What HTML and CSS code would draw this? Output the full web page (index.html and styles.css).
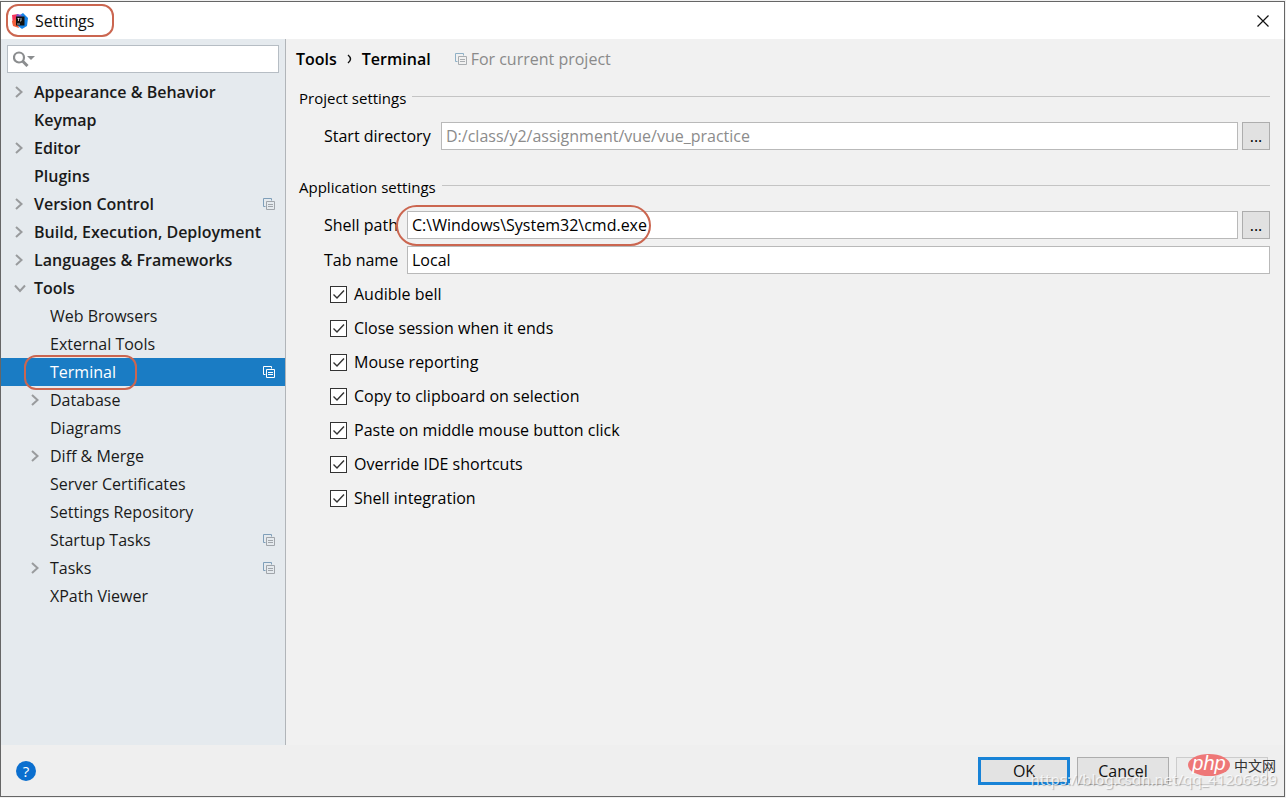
FILE: index.html
```html
<!DOCTYPE html>
<html lang="en">
<head>
<meta charset="utf-8">
<title>Settings</title>
<link rel="stylesheet" href="styles.css">
</head>
<body>
<svg class="defs" aria-hidden="true">
  <symbol id="chevron" viewBox="0 0 12 12"><path d="M2 1l5.500 5L2 11" fill="none" stroke="#999b9d" stroke-width="2"/></symbol>
  <symbol id="chevron-down" viewBox="0 0 12 12"><path d="M1 3.500l5 5.500 5-5.500" fill="none" stroke="#999b9d" stroke-width="2"/></symbol>
  <symbol id="copy" viewBox="0 0 12 12"><path d="M2.500 8.500h-2v-8h8v2" fill="none" stroke="var(--back)"/><path d="M3.500 3.500h8v8h-8zM5 6.500h5M5 8.500h5" fill="none" stroke="var(--front)"/></symbol>
</svg>
<div class="window">
  <header class="titlebar">
    <svg class="app-icon" viewBox="0 0 16 16"><path d="M0 2l6-1 3 4-3 9-5-2z" fill="#f5365d"/><path d="M0 8l4-2 3 9-6-2z" fill="#f2603b"/><path d="M8 2l3-2 5 5-1 8-5 3-4-3z" fill="#1684e8"/><path d="M5 1l5 1-2 3-4-1z" fill="#7b55c9"/><path d="M4 3.500h8.500v9H4z" fill="#111"/><path d="M5.500 5.500h2M6.500 5v3M9 5v3H8M5 11h3" stroke="#ddd" stroke-width=".8" fill="none"/></svg>
    <h1 class="title">Settings</h1>
    <span class="mark mark-title"></span>
    <button class="close" aria-label="Close"><svg viewBox="0 0 12 12"><path d="M.5.5l11 11M11.500.5l-11 11" stroke="#111" stroke-width="1.200"/></svg></button>
  </header>
  <div class="body">
    <aside class="sidebar">
      <label class="search">
        <svg viewBox="0 0 24 16"><circle cx="6" cy="6.500" r="5" fill="none" stroke="#8b8d8f" stroke-width="2.200"/><path d="M9.500 10l5 5" stroke="#8b8d8f" stroke-width="3"/><path d="M14 5h8l-4 4z" fill="#8b8d8f"/></svg>
        <input type="text" aria-label="Search settings">
      </label>
      <nav class="tree">
        <a class="row top" href="#"><svg class="arrow"><use href="#chevron"/></svg><span>Appearance &amp; Behavior</span></a>
        <a class="row top" href="#"><i class="arrow"></i><span>Keymap</span></a>
        <a class="row top" href="#"><svg class="arrow"><use href="#chevron"/></svg><span>Editor</span></a>
        <a class="row top" href="#"><i class="arrow"></i><span>Plugins</span></a>
        <a class="row top" href="#"><svg class="arrow"><use href="#chevron"/></svg><span>Version Control</span><svg class="copy"><use href="#copy"/></svg></a>
        <a class="row top" href="#"><svg class="arrow"><use href="#chevron"/></svg><span>Build, Execution, Deployment</span></a>
        <a class="row top" href="#"><svg class="arrow"><use href="#chevron"/></svg><span>Languages &amp; Frameworks</span></a>
        <a class="row top" href="#"><svg class="arrow"><use href="#chevron-down"/></svg><span>Tools</span></a>
        <a class="row sub" href="#"><i class="arrow"></i><span>Web Browsers</span></a>
        <a class="row sub" href="#"><i class="arrow"></i><span>External Tools</span></a>
        <a class="row sub selected" href="#"><i class="arrow"></i><span>Terminal</span><svg class="copy"><use href="#copy"/></svg><b class="mark mark-row"></b></a>
        <a class="row sub" href="#"><svg class="arrow"><use href="#chevron"/></svg><span>Database</span></a>
        <a class="row sub" href="#"><i class="arrow"></i><span>Diagrams</span></a>
        <a class="row sub" href="#"><svg class="arrow"><use href="#chevron"/></svg><span>Diff &amp; Merge</span></a>
        <a class="row sub" href="#"><i class="arrow"></i><span>Server Certificates</span></a>
        <a class="row sub" href="#"><i class="arrow"></i><span>Settings Repository</span></a>
        <a class="row sub" href="#"><i class="arrow"></i><span>Startup Tasks</span><svg class="copy"><use href="#copy"/></svg></a>
        <a class="row sub" href="#"><svg class="arrow"><use href="#chevron"/></svg><span>Tasks</span><svg class="copy"><use href="#copy"/></svg></a>
        <a class="row sub" href="#"><i class="arrow"></i><span>XPath Viewer</span></a>
      </nav>
    </aside>
    <main class="content">
      <div class="crumbs"><b>Tools</b><svg class="crumb-arrow" viewBox="0 0 5 10"><path d="M1 1q5 4 0 8" fill="none" stroke="#111" stroke-width="1.500"/></svg><b>Terminal</b><span class="scope"><svg class="copy"><use href="#copy"/></svg>For current project</span></div>
      <h2 class="group">Project settings</h2>
      <div class="field start"><label for="dir">Start directory</label><input id="dir" type="text" placeholder="D:/class/y2/assignment/vue/vue_practice"><button class="browse">...</button></div>
      <h2 class="group">Application settings</h2>
      <div class="field"><label for="shell">Shell path</label><input id="shell" type="text" value="C:\Windows\System32\cmd.exe"><button class="browse">...</button><span class="mark mark-shell"></span></div>
      <div class="field"><label for="tab">Tab name</label><input id="tab" type="text" value="Local"></div>
      <div class="checks">
        <label><input type="checkbox" checked>Audible bell</label>
        <label><input type="checkbox" checked>Close session when it ends</label>
        <label><input type="checkbox" checked>Mouse reporting</label>
        <label><input type="checkbox" checked>Copy to clipboard on selection</label>
        <label><input type="checkbox" checked>Paste on middle mouse button click</label>
        <label><input type="checkbox" checked>Override IDE shortcuts</label>
        <label><input type="checkbox" checked>Shell integration</label>
      </div>
    </main>
  </div>
  <footer class="footer">
    <button class="help" aria-label="Help">?</button>
    <button class="btn primary">OK</button>
    <button class="btn">Cancel</button>
    <button class="btn faded" disabled aria-label="Apply"></button>
    <span class="blog">https://blog.csdn.net/qq_41206989</span>
    <span class="brand"><span class="php">php</span><span class="cn">中文网</span></span>
  </footer>
</div>
</body>
</html>
```
FILE: styles.css
```css
* { box-sizing: border-box; }
body {
  margin: 0;
  background: #f0f0f0;
  color: #111;
  font: 16px/20px "Open Sans", "Noto Sans", "Noto Sans CJK SC", sans-serif;
}
h1, h2 { margin: 0; font-weight: 400; }
b { font-weight: 600; }
input, button { font: inherit; color: inherit; margin: 0; }
.defs { position: absolute; width: 0; height: 0; }
.window {
  display: flex;
  flex-direction: column;
  min-height: calc(100vh - 2px);
  margin: 1px 1px 1px 0;
  border: 1px solid #666;
  background: #f1f1f1;
}
.titlebar {
  position: relative;
  display: flex;
  align-items: center;
  gap: 7px;
  height: 37px;
  padding: 0 15px 0 11px;
  background: #fff;
}
.app-icon { width: 16px; height: 16px; }
.title { font-size: 16px; }
.close { margin-left: auto; padding: 0; border: 0; background: none; line-height: 0; }
.close svg { width: 12px; height: 12px; }
.mark {
  position: absolute;
  border: 2px solid #cb6650;
  pointer-events: none;
}
.mark-title { left: 5px; top: 2px; width: 108px; height: 33px; border-radius: 12px; }
.mark-row { left: 23px; top: -3px; width: 113px; height: 35px; border-radius: 12px; }
.mark-shell { left: 97px; top: -6px; width: 255px; height: 41px; border-radius: 24px; }
.body { display: flex; flex: 1; }
.sidebar { width: 285px; border-right: 1px solid #b1b5b9; background: #e5eaee; }
.search {
  display: flex;
  align-items: center;
  height: 28px;
  margin: 6px 6px 5px;
  padding-left: 5px;
  border: 1px solid #b6bdc4;
  background: #fff;
}
.search svg { width: 24px; height: 16px; }
.search input { flex: 1; min-width: 0; border: 0; outline: 0; background: none; }
.row {
  --back: #7f9fb9;
  --front: #a0a5aa;
  position: relative;
  display: flex;
  align-items: center;
  height: 28px;
  padding: 0 10px 0 13px;
  color: #1a1a1a;
  text-decoration: none;
  white-space: nowrap;
}
.top { font-weight: 600; }
.sub { padding-left: 29px; }
.arrow { width: 12px; height: 12px; margin-right: 8px; }
.copy { width: 12px; height: 12px; }
.row .copy { margin-left: auto; }
.selected { --back: #fff; --front: #fff; background: #1a7cc4; color: #fff; }
.content { flex: 1; min-width: 0; padding: 10px 14px 20px 13px; color: #000; }
.crumbs { display: flex; align-items: center; gap: 10px; margin-left: -3px; }
.crumb-arrow { width: 5px; height: 10px; }
.scope {
  --back: #8fb0c6;
  --front: #a9adb0;
  display: flex;
  align-items: center;
  gap: 4px;
  margin-left: 14px;
  color: #8a8a8a;
}
.group { display: flex; gap: 6px; margin: 19px 0 14px; font-size: 15px; }
.group::after { content: ""; flex: 1; height: 1px; margin-top: 8px; background: #c4c4c4; }
.field { position: relative; display: flex; align-items: center; height: 28px; margin-bottom: 7px; padding-left: 25px; }
.field label { width: 83px; white-space: nowrap; }
.start { margin-bottom: 27px; }
.start label { width: 117px; }
.field input {
  flex: 1;
  min-width: 0;
  height: 28px;
  padding: 0 4px;
  border: 1px solid #b9b9b9;
  border-radius: 0;
  background: #fff;
}
.field input::placeholder { color: #8c8c8c; opacity: 1; }
.browse { width: 28px; height: 28px; margin-left: 4px; padding: 0; border: 1px solid #adadad; background: #e1e1e1; }
.checks { display: grid; gap: 14px; margin: 10px 0 0 31px; }
.checks label { display: flex; align-items: center; gap: 7px; width: max-content; }
.checks input {
  appearance: none;
  width: 17px;
  height: 17px;
  border: 1px solid #333;
  background: #fff url("data:image/svg+xml,%3Csvg xmlns='http://www.w3.org/2000/svg' viewBox='0 0 15 15'%3E%3Cpath d='M2.500 7.500l3.500 3.500 7-7.500' fill='none' stroke='%23333' stroke-width='1.400'/%3E%3C/svg%3E");
}
.footer {
  position: relative;
  display: flex;
  align-items: center;
  gap: 7px;
  height: 51px;
  padding: 0 16px 0 15px;
  background: #efefef;
}
.help { width: 20px; height: 20px; margin-right: auto; padding: 0; border: 0; border-radius: 50%; background: #0b6fcf; color: #fff; font-size: 15px; line-height: 20px; }
.btn { width: 92px; height: 28px; padding: 0; border: 1px solid #adadad; background: #e3e3e3; }
.primary { border: 3px solid #1883d7; }
.faded { border-color: #ccc; background: #ececec; }
.blog {
  position: absolute;
  right: 7px;
  bottom: 7px;
  color: rgba(255, 255, 255, .75);
  font: 15px/20px "Noto Sans", sans-serif;
  text-shadow: 1px 1px 1px rgba(0, 0, 0, .25);
}
.brand { position: absolute; right: 8px; top: 9px; display: flex; align-items: center; gap: 4px; }
.php {
  width: 42px;
  height: 22px;
  border-radius: 50%;
  background: #ee7777;
  color: #fff;
  font: italic 20px/19px "Liberation Sans", sans-serif;
  text-align: center;
}
.cn { font: 14px/22px "Noto Sans CJK SC", sans-serif; color: #333; }
```
